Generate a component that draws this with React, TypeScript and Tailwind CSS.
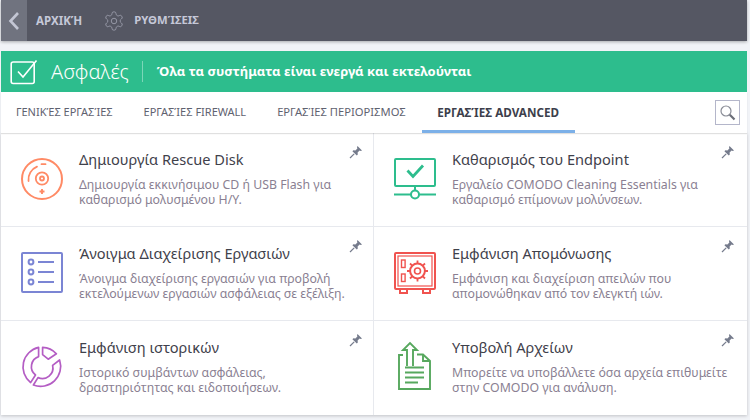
import React from "react";

const Pin = ({ right }: { right: boolean }) => (
  <svg width="14" height="14" viewBox="0 0 14 14" className={right ? "absolute top-[12px] right-[12px]" : "absolute top-[12px] right-[10px]"}>
    <path d="M8.5 1 L13 5.5 L11.8 6 L10.6 5.6 L8.6 7.6 L8.8 9.6 L7.8 10.6 L3.4 6.2 L4.4 5.2 L6.4 5.4 L8.4 3.4 L8 2.2 Z" fill="#757b8c" />
    <path d="M5.2 8.8 L1 13" stroke="#757b8c" strokeWidth="1.2" />
  </svg>
);

const DiskIcon = () => (
  <svg width="44" height="44" viewBox="0 0 44 44" fill="none" stroke="#ff8a65" strokeWidth="1.8">
    <circle cx="22" cy="22" r="20" strokeWidth="2" />
    <path d="M8.5 24 A14 14 0 0 1 17 9.6" strokeLinecap="round" />
    <path d="M21.5 7.2 H25.5" strokeLinecap="round" />
    <circle cx="22" cy="21.5" r="6.2" />
    <circle cx="22" cy="21.5" r="2" />
    <path d="M22 32 V37 M19.5 34.5 H24.5" strokeWidth="1.9" />
  </svg>
);

const MonitorIcon = () => (
  <svg width="44" height="44" viewBox="0 0 44 44" fill="none" stroke="#2dbd8d" strokeWidth="2">
    <rect x="2" y="2" width="40" height="27" rx="1" />
    <path d="M14.5 13.5 L20 19.5 L30 8.5" strokeWidth="2.8" />
    <path d="M22 29 V34" />
    <path d="M1 37.5 H18 M26 37.5 H43" />
    <circle cx="22" cy="37.5" r="4" />
  </svg>
);

const ListIcon = () => (
  <svg width="44" height="44" viewBox="0 0 44 44" fill="none" stroke="#7b85d4" strokeWidth="2">
    <rect x="2" y="2" width="40" height="39" rx="1" />
    <circle cx="11" cy="11" r="2.4" />
    <circle cx="11" cy="21" r="2.4" />
    <circle cx="11" cy="31" r="2.4" />
    <path d="M18 11 H34 M18 21 H34 M18 31 H34" />
  </svg>
);

const SafeIcon = () => (
  <svg width="44" height="44" viewBox="0 0 44 44" fill="none" stroke="#f0534f" strokeWidth="2">
    <rect x="2" y="2" width="40" height="36" rx="1" />
    <rect x="5" y="5" width="34" height="30" strokeWidth="1.2" />
    <rect x="8.5" y="9" width="3.6" height="7.5" strokeWidth="1.4" />
    <rect x="8.5" y="23" width="3.6" height="7.5" strokeWidth="1.4" />
    <circle cx="24.5" cy="20" r="7.4" strokeWidth="2" />
    <circle cx="24.5" cy="20" r="3" strokeWidth="1.6" />
    <path d="M24.5 9.5 V12.6 M24.5 27.4 V30.5 M14 20 H17.1 M31.9 20 H35 M17 12.5 L19.2 14.7 M29.8 25.3 L32 27.5 M32 12.5 L29.8 14.7 M19.2 25.3 L17 27.5" strokeWidth="1.8" />
    <path d="M7 38 V42 H14 V38 M30 38 V42 H37 V38" />
  </svg>
);

const RingIcon = () => (
  <svg width="44" height="44" viewBox="0 0 44 44" fill="none" stroke="#b45dc4" strokeWidth="1.7" strokeLinejoin="round">
    <path d="M18.6 2.4 V11.6 A10.6 10.6 0 0 0 15.5 30 L10.6 37.6 A20 20 0 0 1 18.6 2.4 Z" />
    <path d="M22.6 2.4 A20 20 0 0 1 36.4 8.8 L28.2 14.2 L22.6 9.6 Z" />
    <path d="M39.6 15 A20 20 0 0 1 13.4 40 L18 32.6 A10.6 10.6 0 0 0 32.6 20.4 Z" />
  </svg>
);

const FileIcon = () => (
  <svg width="36" height="50" viewBox="0 0 36 50" fill="none" stroke="#57a85e" strokeWidth="1.9" className="ml-[4px] -mt-[4px]">
    <path d="M6 14 H2 V48 H33 V20 L26 13.5 H20" />
    <path d="M26 13.5 V20 H33" />
    <path d="M10 25 V9 H6 L13 2 L20 9 H16 V25" />
    <path d="M8 26.5 H27 M8 31.5 H27 M8 36.5 H27 M8 41.5 H21" />
  </svg>
);

const cards = [
  { t: "Δημιουργία Rescue Disk", d: ["Δημιουργία εκκινήσιμου CD ή USB Flash για", "καθαρισμό μολυσμένου Η/Υ."], i: <DiskIcon /> },
  { t: "Καθαρισμός του Endpoint", d: ["Εργαλείο COMODO Cleaning Essentials για", "καθαρισμό επίμονων μολύνσεων."], i: <MonitorIcon /> },
  { t: "Άνοιγμα Διαχείρισης Εργασιών", d: ["Άνοιγμα διαχείρισης εργασιών για προβολή", "εκτελούμενων εργασιών ασφάλειας σε εξέλιξη."], i: <ListIcon /> },
  { t: "Εμφάνιση Απομόνωσης", d: ["Εμφάνιση και διαχείριση απειλών που", "απομονώθηκαν από τον ελεγκτή ιών."], i: <SafeIcon /> },
  { t: "Εμφάνιση ιστορικών", d: ["Ιστορικό συμβάντων ασφάλειας,", "δραστηριότητας και ειδοποιήσεων."], i: <RingIcon /> },
  { t: "Υποβολή Αρχείων", d: ["Μπορείτε να υποβάλλετε όσα αρχεία επιθυμείτε", "στην COMODO για ανάλυση."], i: <FileIcon /> },
];

export default function App() {
  return (
    <div className="w-[750px] h-[420px] overflow-hidden bg-[#f1f3f7] pl-px pr-[3px] font-['Noto_Sans',sans-serif]">
      <div className="h-[41px] flex items-center bg-[#555763] shadow-[0_1px_3px_rgba(0,0,0,0.3)]">
        <div className="w-[26px] h-full flex items-center justify-center bg-[#70737f]">
          <svg width="12" height="20" viewBox="0 0 12 20" fill="none">
            <path d="M10 2 L2.5 10 L10 18" stroke="#c3c6d4" strokeWidth="2.6" />
          </svg>
        </div>
        <span className="ml-[9px] text-[11.5px] font-bold text-[#c5c8d8]">ΑΡΧΙΚΉ</span>
        <svg width="22" height="22" viewBox="0 0 24 24" fill="none" stroke="#9a9cab" strokeWidth="1" className="ml-[21px]">
          <path d="M12.2 2h-.4a2 2 0 0 0-2 2v.2a2 2 0 0 1-1 1.7l-.4.3a2 2 0 0 1-2 0l-.2-.1a2 2 0 0 0-2.7.7l-.2.4a2 2 0 0 0 .7 2.7l.2.1a2 2 0 0 1 1 1.7v.5a2 2 0 0 1-1 1.8l-.2.1a2 2 0 0 0-.7 2.7l.2.4a2 2 0 0 0 2.7.7l.2-.1a2 2 0 0 1 2 0l.4.3a2 2 0 0 1 1 1.7v.2a2 2 0 0 0 2 2h.4a2 2 0 0 0 2-2v-.2a2 2 0 0 1 1-1.7l.4-.3a2 2 0 0 1 2 0l.2.1a2 2 0 0 0 2.7-.7l.2-.4a2 2 0 0 0-.7-2.7l-.2-.1a2 2 0 0 1-1-1.8v-.5a2 2 0 0 1 1-1.7l.2-.1a2 2 0 0 0 .7-2.7l-.2-.4a2 2 0 0 0-2.7-.7l-.2.1a2 2 0 0 1-2 0l-.4-.3a2 2 0 0 1-1-1.7V4a2 2 0 0 0-2-2z" />
          <circle cx="12" cy="12" r="3" />
        </svg>
        <span className="ml-[9px] text-[11.3px] font-bold text-[#c5c8d8]">ΡΥΘΜΊΣΕΙΣ</span>
      </div>

      <div className="mt-[10px] h-[41px] flex items-center bg-[#2dbd8d] text-white">
        <svg width="28" height="26" viewBox="0 0 28 26" fill="none" stroke="#fff" className="ml-[9px]">
          <rect x="1.2" y="3" width="23" height="21.5" rx="2" strokeWidth="1.6" />
          <path d="M8 12.5 L13 18 L26.5 1.5" strokeWidth="1.6" />
        </svg>
        <span className="ml-[13px] text-[20px] font-light leading-none">Ασφαλές</span>
        <div className="ml-[13px] w-px h-[21px] bg-[#7bd6b8]" />
        <span className="ml-[14px] text-[13px] font-bold">Όλα τα συστήματα είναι ενεργά και εκτελούνται</span>
      </div>

      <div className="relative z-10 h-[41px] flex items-stretch bg-white shadow-[0_1px_1px_rgba(0,0,0,0.12)]">
        <div className="ml-[15px] flex items-center text-[11px] text-[#5f6270]">ΓΕΝΙΚΈΣ ΕΡΓΑΣΊΕΣ</div>
        <div className="ml-[31px] flex items-center text-[11px] text-[#5f6270]">ΕΡΓΑΣΊΕΣ FIREWALL</div>
        <div className="ml-[31px] flex items-center text-[11.2px] text-[#5f6270]">ΕΡΓΑΣΊΕΣ ΠΕΡΙΟΡΙΣΜΟΣ</div>
        <div className="ml-[16px] w-[153px] flex items-center justify-center border-b-[3px] border-[#7cb0e8] pt-[3px] text-[11.7px] font-bold text-[#3d3f4c]">ΕΡΓΑΣΊΕΣ ADVANCED</div>
        <div className="ml-auto mr-[7px] self-center w-[25px] h-[25px] flex items-center justify-center border border-[#b4b6ca]">
          <svg width="17" height="17" viewBox="0 0 17 17" fill="none">
            <circle cx="7" cy="7" r="5" stroke="#8a8d97" strokeWidth="1.2" />
            <path d="M10.8 10.8 L15.5 15.5" stroke="#6b6e78" strokeWidth="2.2" />
          </svg>
        </div>
      </div>

      <div className="grid grid-cols-[373px_373px] grid-rows-[94px_94px_94px] bg-white shadow-[0_1px_3px_rgba(0,0,0,0.2)]">
        {cards.map((c, k) => (
          <div
            key={c.t}
            className={
              "relative flex " +
              (k % 2 === 0 ? "border-r border-[#e7e9ee] " : "") +
              (k < 4 ? "border-b border-[#e7e9ee]" : "")
            }
          >
            <div className="w-[78px] pl-[19px] pt-[24px]">{c.i}</div>
            <div className="pt-[16px]">
              <div className="text-[14.6px] leading-[20px] text-[#3f414b] whitespace-nowrap">{c.t}</div>
              <div className="mt-[8px] text-[12.3px] leading-[15px] text-[#8a7f92] whitespace-nowrap">
                {c.d[0]}
                <br />
                {c.d[1]}
              </div>
            </div>
            <Pin right={k % 2 === 1} />
          </div>
        ))}
      </div>
    </div>
  );
}
